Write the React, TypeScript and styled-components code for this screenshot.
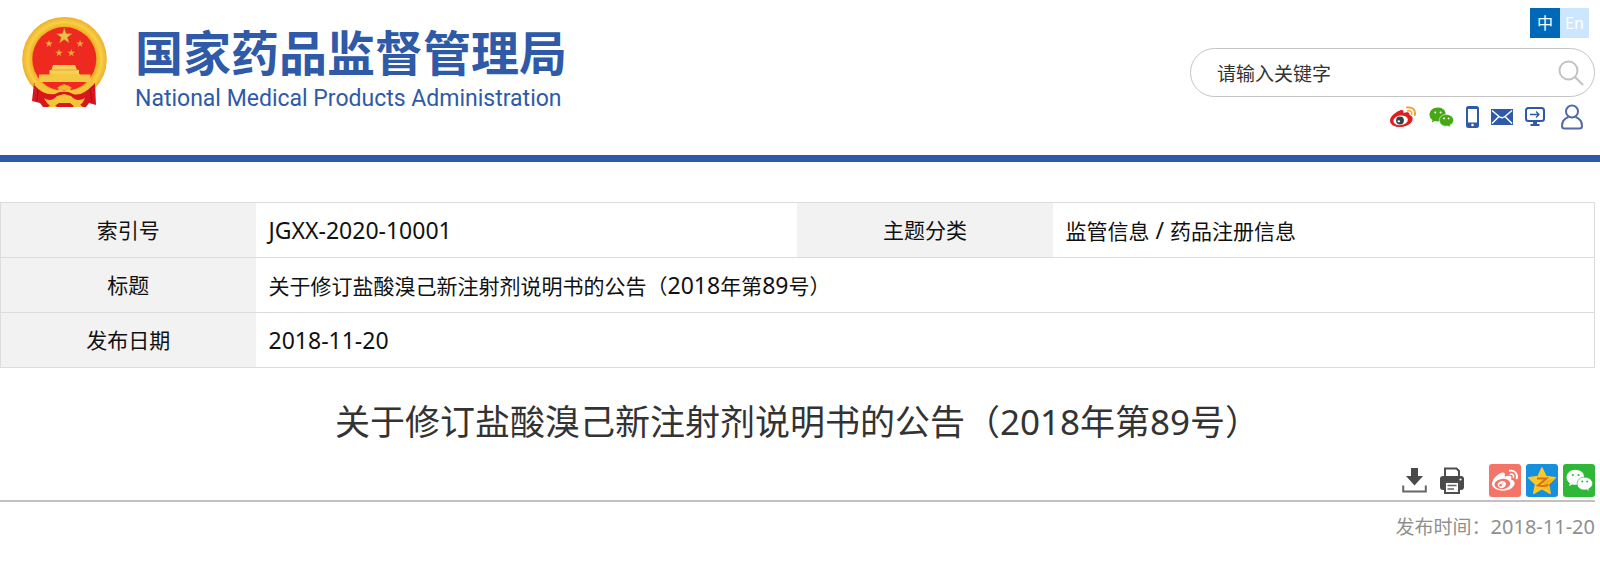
import React from 'react';
import styled, { createGlobalStyle } from 'styled-components';
import { FaWeibo } from 'react-icons/fa';

const brand = '#2e5aa8';
const edge = '#dcdcdc';

const GlobalStyle = createGlobalStyle`
  *, *::before, *::after { box-sizing: border-box; }
  body {
    margin: 0;
    background: #fff;
    color: #111;
    font-family: "Noto Sans", "Noto Sans CJK SC", sans-serif;
  }
  svg { display: block; }
`;

const Header = styled.header`
  display: flex;
  justify-content: space-between;
  align-items: flex-start;
  min-height: 162px;
  padding: 8px 5px 0 10px;
  border-bottom: 7px solid ${brand};
`;

const Brand = styled.a`
  display: flex;
  gap: 17px;
  padding-top: 2px;
  color: ${brand};
  text-decoration: none;
`;

const BrandText = styled.span`
  display: flex;
  flex-direction: column;
  padding-top: 10px;
`;

const BrandName = styled.span`
  font: 700 48px/60px "Noto Sans CJK SC", sans-serif;
  white-space: nowrap;
`;

const BrandLatin = styled.span`
  margin-top: 3px;
  font: 400 23px/32px Roboto, sans-serif;
  white-space: nowrap;
`;

const Tools = styled.div`
  display: flex;
  flex-direction: column;
  align-items: flex-end;
  width: 405px;
`;

const Languages = styled.nav`
  display: flex;
  margin: 0 6px 10px 0;
`;

const Language = styled.a<{ $active?: boolean }>`
  width: ${(p) => (p.$active ? 30 : 29)}px;
  background: ${(p) => (p.$active ? '#0068b9' : '#cce6ff')};
  color: #fff;
  font-size: 16px;
  line-height: 30px;
  text-align: center;
  text-decoration: none;
`;

const Search = styled.form`
  display: flex;
  align-items: center;
  width: 100%;
  height: 49px;
  padding: 0 10px 0 26px;
  border: 1px solid #c4c4c4;
  border-radius: 25px;
`;

const SearchInput = styled.input`
  flex: 1;
  min-width: 0;
  padding: 0;
  border: 0;
  outline: 0;
  background: none;
  color: #333;
  font: 400 19px/28px "Noto Sans CJK SC", sans-serif;
  &::placeholder { color: #333; opacity: 1; }
`;

const IconButton = styled.button`
  display: block;
  padding: 0;
  border: 0;
  background: none;
  cursor: pointer;
`;

const QuickLinks = styled.nav`
  display: flex;
  align-items: center;
  gap: 12px;
  height: 26px;
  margin: 7px 12px 0 0;
`;

const Main = styled.main`
  padding: 40px 5px 16px 0;
`;

const InfoTable = styled.table`
  width: 100%;
  table-layout: fixed;
  border-collapse: collapse;
  border: 1px solid ${edge};
  font-size: 21px;
  line-height: 30px;
`;

const Row = styled.tr`
  height: 55px;
  border-bottom: 1px solid ${edge};
`;

const Label = styled.th`
  padding: 0;
  background: #f2f2f2;
  font-weight: 400;
`;

const Value = styled.td`
  padding: 0 13px;
`;

const Latin = styled.span<{ $size: number }>`
  font-size: ${(p) => p.$size}px;
`;

const Title = styled.h1`
  margin: 26px 0 0;
  color: #333;
  font-size: 35px;
  font-weight: 400;
  line-height: 56px;
  text-align: center;
`;

const ShareBar = styled.div`
  display: flex;
  justify-content: flex-end;
  align-items: center;
  gap: 5px;
  padding: 14px 0 3px;
  border-bottom: 2px solid #c4c0c0;
`;

const PageActions = styled.div`
  display: flex;
  gap: 12px;
  margin-right: 19px;
`;

const ShareButton = styled.button<{ $color: string }>`
  display: flex;
  align-items: center;
  justify-content: center;
  width: 32px;
  height: 33px;
  padding: 0;
  border: 0;
  border-radius: 3px;
  background: ${(p) => p.$color};
  color: #fff;
  cursor: pointer;
`;

const Published = styled.p`
  margin: 11px 0 0;
  color: #8f8f8f;
  font-size: 19px;
  line-height: 28px;
  text-align: right;
`;

function starPoints(cx: number, cy: number, r: number, inner = 0.4) {
  return Array.from({ length: 10 }, (_, i) => {
    const a = (Math.PI / 5) * i - Math.PI / 2;
    const d = i % 2 ? r * inner : r;
    return `${(cx + d * Math.cos(a)).toFixed(2)},${(cy + d * Math.sin(a)).toFixed(2)}`;
  }).join(' ');
}

function Emblem() {
  return (
    <svg width="108" height="110" viewBox="0 0 108 110" aria-hidden="true">
      <defs>
        <radialGradient id="gold" cx="50%" cy="50%" r="50%">
          <stop offset="0.74" stopColor="#f0a81f" />
          <stop offset="0.87" stopColor="#f7cf45" />
          <stop offset="1" stopColor="#eeb02c" />
        </radialGradient>
      </defs>
      <circle cx="54.5" cy="49.2" r="42.3" fill="url(#gold)" />
      <circle cx="54.3" cy="49" r="32" fill="#ee2a20" />
      <path d="M24 73 Q30 80 44 82 H65 Q79 80 85 73 L86 95 L79 93 L76 97 H33 L30 93 L22 91Z" fill="#d8161b" />
      <path d="M24 76 L28 79 L27 91 M84 76 L80 79 L82 92" fill="none" stroke="#a90f16" strokeWidth="1" />
      <path d="M28 71 Q38 81 48 80 L54 74 L61 80 Q70 81 80 71 L84 74 Q72 87 63 84 L54 80 L45 84 Q34 86 24 75Z" fill="#f6c43a" />
      <path d="M34 88 Q41 93 47 86 L54 84 L61 86 Q67 93 75 88 Q72 96 65 97 L60 93 H49 L43 97 Q37 95 34 88Z" fill="#f6c43a" />
      <path d="M47 78 Q54 71 62 78 Q54 83 47 78Z" fill="#f3b631" />
      <path d="M38 97 H47 L43 93Z M63 97 H73 L67 92Z" fill="#f6c43a" />
      <polygon points={starPoints(54.3, 26.3, 8)} fill="#e8c24a" stroke="#c88a20" strokeWidth="0.5" />
      {[[39, 33.7], [70, 33.7], [49, 43], [61.3, 43]].map(([x, y]) => (
        <polygon key={x} points={starPoints(x, y, 4)} fill="#e9a83a" />
      ))}
      <path d="M43 55 H65 L67 60 H69 V64.500 H39.500 V60 H41.500Z" fill="#f6d054" />
      <path d="M29 64.500 H39 V64 H70 V64.500 H80.500 V72 H29Z" fill="#f5c844" />
      <path d="M41 60 H68" stroke="#e99a2b" strokeWidth="0.8" />
    </svg>
  );
}

function WeiboColor() {
  return (
    <svg width="28" height="22" viewBox="0 0 28 22" aria-hidden="true">
      <path d="M11 4.500 C13.500 3.500 15 4.500 14.500 7 C17.500 5.800 21 5.800 20.500 9 C24 10 24.500 13 22.500 16 C18 22.500 3 23 1 15.500 C.3 12 5 6.500 11 4.500Z" fill="#dc1f1f" />
      <ellipse cx="11.600" cy="14.300" rx="7.300" ry="4.800" fill="#fff" transform="rotate(-8 11.600 14.300)" />
      <circle cx="11" cy="14.500" r="3.900" fill="#36404a" />
      <ellipse cx="9.800" cy="15.300" rx="1.300" ry="1.100" fill="#fff" />
      <path d="M18 1.600 C23.500 .5 27 4 25.800 9" fill="none" stroke="#f4a52e" strokeWidth="2" strokeLinecap="round" />
      <path d="M18.600 4.800 C21.500 4.300 23.200 6 22.700 8.300" fill="none" stroke="#f4a52e" strokeWidth="1.500" strokeLinecap="round" />
    </svg>
  );
}

function Wechat({ color, eyes, width }: { color: string; eyes: string; width: number }) {
  return (
    <svg width={width} height={Math.round(width * 0.84)} viewBox="0 0 25 21" aria-hidden="true">
      <path d="M8.800 .5 C4 .5 .5 3.700 .5 7.600 C.5 9.900 1.700 11.800 3.500 13.100 L2.800 15.600 L5.800 14.100 C9 15 12.300 14.300 14.600 12.500 C18.500 9 17.500 .5 8.800 .5Z" fill={color} />
      <path d="M17.300 7.400 C13.300 7.400 10.300 10 10.300 13.400 C10.300 17.300 14.300 20 19 19 L21.700 20.400 L21 18.200 C23.200 17.100 24.600 15.400 24.600 13.300 C24.600 10 21.300 7.400 17.300 7.400Z" fill={color} stroke={eyes} strokeWidth="0.6" />
      <g fill={eyes}>
        <circle cx="6.300" cy="5.400" r="1" />
        <circle cx="11.600" cy="5.400" r="1" />
        <circle cx="15" cy="11.400" r="0.900" />
        <circle cx="19.600" cy="11.400" r="0.900" />
      </g>
    </svg>
  );
}

function Phone() {
  return (
    <svg width="13" height="22" viewBox="0 0 13 22" aria-hidden="true">
      <rect width="13" height="22" rx="2.500" fill={brand} />
      <rect x="2" y="3" width="9" height="13.500" fill="#fff" />
      <circle cx="6.500" cy="19" r="1.300" fill="#fff" />
    </svg>
  );
}

function Mail() {
  return (
    <svg width="22" height="16" viewBox="0 0 22 16" aria-hidden="true">
      <rect width="22" height="16" fill={brand} />
      <path d="M1 1.500 L8 7.500 Q11 10 14 7.500 L21 1.500 M1 14.500 L8 7.500 M21 14.500 L14 7.500" fill="none" stroke="#fff" strokeWidth="1.500" />
    </svg>
  );
}

function Monitor() {
  return (
    <svg width="20" height="20" viewBox="0 0 20 20" aria-hidden="true">
      <rect x="1" y="1" width="18" height="13" rx="2.500" fill="none" stroke={brand} strokeWidth="2" />
      <path d="M5 7.500 H14 M11 4.500 L14 7.500 L11 10.500" fill="none" stroke={brand} strokeWidth="1.300" />
      <path d="M8 14 H12 V17 H14.500 V19 H5.500 V17 H8Z" fill={brand} />
    </svg>
  );
}

function Person() {
  return (
    <svg width="22" height="26" viewBox="0 0 22 26" fill="none" stroke="#5468ac" strokeWidth="2" aria-hidden="true">
      <circle cx="11" cy="7.500" r="6" />
      <path d="M7.500 13 C3.500 14.500 1 18 1 22 Q1 24.500 3.500 24.500 H18.500 Q21 24.500 21 22 C21 18 18.500 14.500 14.500 13" />
    </svg>
  );
}

function Magnifier() {
  return (
    <svg width="26" height="26" viewBox="0 0 26 26" fill="none" stroke="#c2c2c2" strokeWidth="2" aria-hidden="true">
      <circle cx="10.500" cy="10.500" r="9" />
      <path d="M17 17 L25 25" />
    </svg>
  );
}

function Download() {
  return (
    <svg width="25" height="27" viewBox="0 0 25 27" aria-hidden="true">
      <path d="M9 1 H16 V9 H21 L12.500 18.500 L4 9 H9Z" fill="#4a4a4a" />
      <path d="M1.200 18.500 V24.500 H23.800 V18.500" fill="none" stroke="#666" strokeWidth="2" />
    </svg>
  );
}

function Printer() {
  return (
    <svg width="26" height="27" viewBox="0 0 26 27" aria-hidden="true">
      <path d="M6 9 V1.500 H17.500 L20 4 V9" fill="#fff" stroke="#4f4f4f" strokeWidth="2" />
      <rect x="1" y="9" width="24" height="14" rx="3" fill="#4a4a4a" />
      <rect x="6" y="15" width="14" height="11" fill="#fff" stroke="#4f4f4f" strokeWidth="2" />
      <path d="M8.500 18.500 H17.500 M8.500 22 H15" stroke="#666" strokeWidth="1.500" />
      <circle cx="21.500" cy="12.500" r="1.100" fill="#fff" />
    </svg>
  );
}

function QzoneStar() {
  return (
    <svg width="30" height="30" viewBox="0 0 30 30" aria-hidden="true">
      <polygon points={starPoints(15, 16, 14, 0.48)} fill="#fdc926" stroke="#fdc926" strokeWidth="1.500" strokeLinejoin="round" />
      <path d="M15 16 L28 12 L20 19 L23.500 27Z" fill="#f9ae17" />
      <path d="M10 12.500 H19.500 L11 19.500 Q16 20.500 21.500 19" fill="none" stroke="#d9701a" strokeWidth="2" />
    </svg>
  );
}

const quickLinks = [
  { label: '微博', icon: <WeiboColor /> },
  { label: '微信', icon: <Wechat color="#45a814" eyes="#fff" width={25} /> },
  { label: '手机版', icon: <Phone /> },
  { label: '邮箱', icon: <Mail /> },
  { label: '客户端', icon: <Monitor /> },
  { label: '个人中心', icon: <Person /> },
];

const QuickLink = styled.a`
  display: block;
  &:last-child { margin-left: 4px; }
`;

function NoticeTitle({ latin }: { latin: number }) {
  return (
    <>
      关于修订盐酸溴己新注射剂说明书的公告（<Latin $size={latin}>2018</Latin>年第
      <Latin $size={latin}>89</Latin>号）
    </>
  );
}

export default function App() {
  return (
    <>
      <GlobalStyle />
      <Header>
        <Brand href="#home">
          <Emblem />
          <BrandText>
            <BrandName>国家药品监督管理局</BrandName>
            <BrandLatin>National Medical Products Administration</BrandLatin>
          </BrandText>
        </Brand>
        <Tools>
          <Languages aria-label="语言">
            <Language href="#zh" $active>中</Language>
            <Language href="#en">En</Language>
          </Languages>
          <Search role="search" onSubmit={(e) => e.preventDefault()}>
            <SearchInput type="text" aria-label="请输入关键字" placeholder="请输入关键字" />
            <IconButton type="submit" aria-label="搜索"><Magnifier /></IconButton>
          </Search>
          <QuickLinks aria-label="快捷入口">
            {quickLinks.map((l) => (
              <QuickLink key={l.label} href="#quick" aria-label={l.label}>{l.icon}</QuickLink>
            ))}
          </QuickLinks>
        </Tools>
      </Header>
      <Main>
        <InfoTable>
          <colgroup>
            <col style={{ width: '16%' }} />
            <col style={{ width: '34%' }} />
            <col style={{ width: '16%' }} />
            <col style={{ width: '34%' }} />
          </colgroup>
          <tbody>
            <Row>
              <Label scope="row">索引号</Label>
              <Value><Latin $size={23}>JGXX-2020-10001</Latin></Value>
              <Label scope="row">主题分类</Label>
              <Value>监管信息<Latin $size={23}> / </Latin>药品注册信息</Value>
            </Row>
            <Row>
              <Label scope="row">标题</Label>
              <Value colSpan={3}><NoticeTitle latin={23} /></Value>
            </Row>
            <Row>
              <Label scope="row">发布日期</Label>
              <Value colSpan={3}><Latin $size={23}>2018-11-20</Latin></Value>
            </Row>
          </tbody>
        </InfoTable>
        <Title><NoticeTitle latin={35} /></Title>
        <ShareBar>
          <PageActions>
            <IconButton type="button" aria-label="下载"><Download /></IconButton>
            <IconButton type="button" aria-label="打印"><Printer /></IconButton>
          </PageActions>
          <ShareButton type="button" aria-label="分享到微博" $color="#f47568"><FaWeibo size={26} /></ShareButton>
          <ShareButton type="button" aria-label="分享到QQ空间" $color="#1690dc"><QzoneStar /></ShareButton>
          <ShareButton type="button" aria-label="分享到微信" $color="#2fb838"><Wechat color="#fff" eyes="#2fb838" width={27} /></ShareButton>
        </ShareBar>
        <Published>发布时间：<Latin $size={20}>2018-11-20</Latin></Published>
      </Main>
    </>
  );
}
